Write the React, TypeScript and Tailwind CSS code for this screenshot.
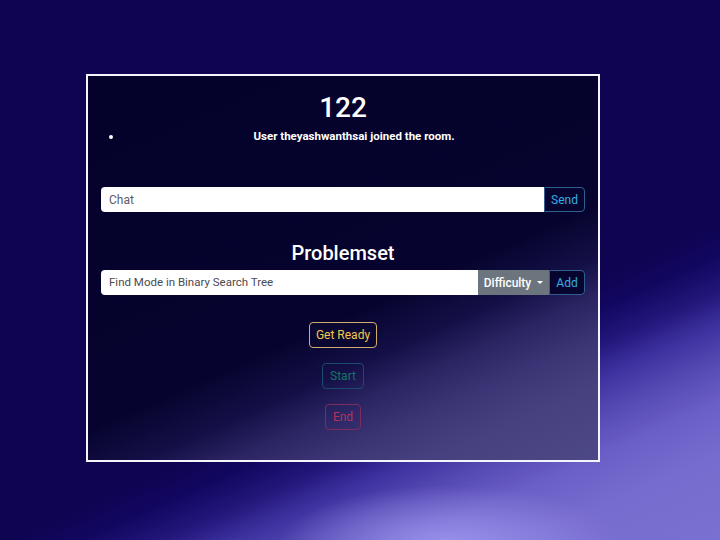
import React from "react";

export default function App() {
  return (
    <div
      className="w-[720px] h-[540px] overflow-hidden pt-[74px] pl-[86px] bg-[#0e0452] bg-[radial-gradient(ellipse_170px_60px_at_450px_545px,#9a92ec_0%,rgba(154,146,236,0)_100%),linear-gradient(336deg,#7a70d2_0%,#766bce_10%,#6a5fc6_16%,#5448b2_21%,#3e32a0_25%,#22167a_29%,#120760_33%,#0e0452_37%,#0e0452_100%)]"
      style={{ fontFamily: "Roboto, 'Liberation Sans', sans-serif" }}
    >
      <div className="w-[514px] h-[388px] border-2 border-[#f4f4fa] pt-[15px] px-[13px] text-white bg-[linear-gradient(336deg,#4d4886_0%,#47427f_12%,#3b3575_20%,#2a2462_27%,#141047_33%,#06042e_42%,#04022b_100%)]">
        <h1 className="text-[28px] leading-[34px] font-medium text-center">122</h1>
        <ul className="list-disc pl-[22px] mt-[3px]">
          <li className="text-[11.5px] leading-[16px] font-bold text-center">
            User theyashwanthsai joined the room.
          </li>
        </ul>
        <div className="mt-[43px] h-[25px] flex">
          <div className="flex-1 bg-white rounded-l-[4px] flex items-center pl-[8px] text-[12px] text-[#5b5b66]">
            Chat
          </div>
          <div className="w-[41px] border border-[#2f5f90] rounded-r-[4px] bg-[#07052f] flex items-center justify-center text-[12px] text-[#35aee0]">
            Send
          </div>
        </div>
        <h2 className="mt-[29px] text-[20px] leading-[24px] font-medium text-center">Problemset</h2>
        <div className="mt-[5px] h-[25px] flex">
          <div className="flex-1 bg-white rounded-l-[4px] flex items-center pl-[8px] text-[11.5px] text-[#4a4a52]">
            Find Mode in Binary Search Tree
          </div>
          <div className="w-[71px] bg-[#6c757d] flex items-center justify-center gap-[6px] text-[12px] font-medium text-white">
            <span>Difficulty</span>
            <span className="w-0 h-0 border-l-[3px] border-r-[3px] border-t-[3px] border-l-transparent border-r-transparent border-t-white"></span>
          </div>
          <div className="w-[36px] border border-[#2f5f90] rounded-r-[4px] bg-[#07052f] flex items-center justify-center text-[12px] text-[#35aee0]">
            Add
          </div>
        </div>
        <div className="mt-[27px] flex flex-col items-center gap-[15px]">
          <div className="w-[68px] h-[26px] rounded-[4px] border border-[#cfae70] flex items-center justify-center text-[12px] text-[#f5c84c] bg-[#0a0733]">
            Get Ready
          </div>
          <div className="w-[42px] h-[26px] rounded-[4px] border border-[#1c4a6e] flex items-center justify-center text-[12px] text-[#147565]">
            Start
          </div>
          <div className="w-[36px] h-[26px] rounded-[4px] border border-[#7e2b5f] flex items-center justify-center text-[12px] text-[#b8305c]">
            End
          </div>
        </div>
      </div>
    </div>
  );
}
